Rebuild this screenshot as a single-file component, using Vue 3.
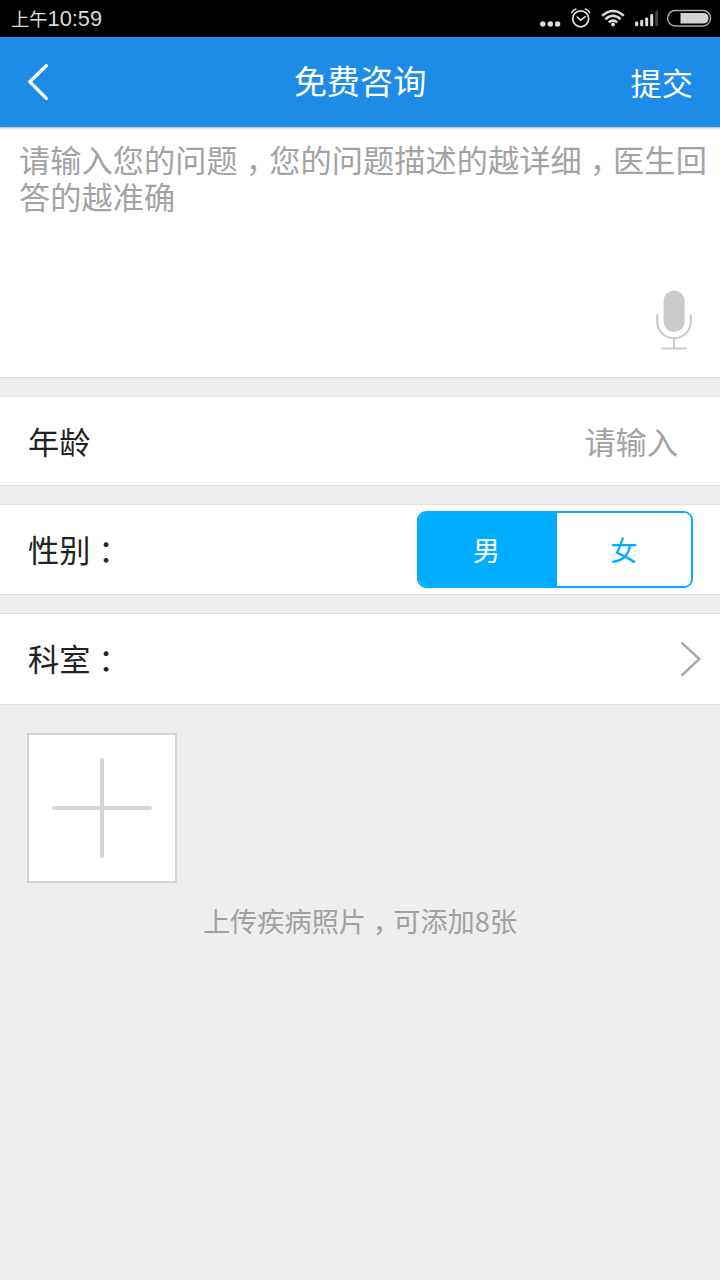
<script setup>
import { ref } from 'vue'

const gender = ref('male')
const question = ref('')
</script>

<template>
  <div class="screen">
    <div class="status">
      <div class="time"><span class="ampm">上午</span>10:59</div>
      <svg class="status-icons" width="190" height="37" viewBox="530 0 190 37" fill="none">
        <g fill="#dcdcdc">
          <circle cx="542.8" cy="24" r="2.7" />
          <circle cx="550.3" cy="24" r="2.7" />
          <circle cx="557.6" cy="24" r="2.7" />
        </g>
        <g stroke="#dcdcdc" stroke-linecap="round">
          <circle cx="580.7" cy="18.8" r="8" stroke-width="1.8" />
          <path d="M577.2 17l3.6 3.2 4.4-3.6" stroke-width="1.6" />
          <path d="M571.7 12.6q1.2-2.4 4.2-3.6M589.7 12.6q-1.2-2.4-4.2-3.6" stroke-width="1.6" />
        </g>
        <g stroke="#dcdcdc" stroke-width="2.5">
          <path d="M602.2 15.8q10.8-9.6 21.6 0" />
          <path d="M605.4 19.2q7.6-6.8 15.2 0" />
          <path d="M608.8 22.4q4.2-3.6 8.4 0" />
        </g>
        <circle cx="613" cy="24.5" r="1.9" fill="#dcdcdc" />
        <g fill="#dcdcdc">
          <rect x="635.2" y="21.6" width="3" height="4.6" rx="1" />
          <rect x="640.2" y="20" width="3" height="6.2" rx="1" />
          <rect x="645.2" y="17.4" width="3" height="8.8" rx="1" />
          <rect x="650.2" y="14" width="3" height="12.2" rx="1" />
          <rect x="655.2" y="10.4" width="2.8" height="15.8" rx="1" fill="#444" />
        </g>
        <rect x="667.6" y="10.6" width="43" height="15.4" rx="7.7" stroke="#a9a9a9" stroke-width="1.5" />
        <path d="M680.5 13h22.5q5.5 0 5.5 5.3t-5.5 5.3h-22.5z" fill="#d2d2d2" />
      </svg>
    </div>

    <header class="header">
      <svg class="back" width="24" height="40" viewBox="0 0 24 40">
        <path d="M20.3 3.7L3.7 19.7 20.3 36.3" fill="none" stroke="#fff" stroke-width="3.3" stroke-linecap="round" stroke-linejoin="round" />
      </svg>
      <h1>免费咨询</h1>
      <a class="submit">提交</a>
    </header>

    <section class="question">
      <p v-if="!question" class="placeholder">请输入您的问题<span class="comma">，</span>您的问题描述的越详细<span class="comma">，</span>医生回答的越准确</p>
      <svg class="mic" width="38" height="62" viewBox="0 0 38 62">
        <rect x="8.6" y="1.5" width="21" height="41.5" rx="10.5" fill="#cacaca" />
        <path d="M2.2 26v6.5a16.8 16.8 0 0 0 33.6 0v-6.5M19 49.5v9M7.5 59.5h23.5" fill="none" stroke="#cacaca" stroke-width="2.1" stroke-linecap="round" />
      </svg>
    </section>

    <section class="row age">
      <span>年龄</span>
      <span class="input">请输入</span>
    </section>

    <section class="row sex">
      <span>性别<span class="colon">：</span></span>
      <div class="toggle">
        <button :class="{ on: gender === 'male' }" @click="gender = 'male'">男</button>
        <button :class="{ on: gender === 'female' }" @click="gender = 'female'">女</button>
      </div>
    </section>

    <section class="row dept">
      <span>科室<span class="colon">：</span></span>
      <svg class="chevron" width="22" height="36" viewBox="0 0 22 36">
        <path d="M2.2 2.2L19.3 18 2.2 34" fill="none" stroke="#a9a9a9" stroke-width="2.4" stroke-linecap="round" />
      </svg>
    </section>

    <section class="upload">
      <div class="add">
        <svg width="102" height="102" viewBox="0 0 102 102">
          <path d="M51 3v96M3 51h96" stroke="#d5d5d5" stroke-width="4" stroke-linecap="round" />
        </svg>
      </div>
      <p class="hint">上传疾病照片<span class="comma">，</span>可添加8张</p>
    </section>
  </div>
</template>

<style>
body {
  background: #eee;
}
</style>

<style scoped>
.screen {
  width: 720px;
  height: 1280px;
  overflow: hidden;
  background: #eee;
  color: #222;
  font: 31.2px/37px "Noto Sans CJK SC", sans-serif;
}
h1, p {
  margin: 0;
  font-weight: 400;
}
svg {
  display: block;
  flex: none;
}
.status {
  display: flex;
  justify-content: space-between;
  height: 37px;
  background: #000;
}
.time {
  padding-left: 11px;
  color: #dcdcdc;
  font: 21.8px/37px "Liberation Sans", "Noto Sans CJK SC", sans-serif;
}
.ampm {
  font-size: 18.3px;
}
.header {
  display: grid;
  grid-template-columns: 1fr auto 1fr;
  align-items: center;
  height: 90px;
  padding: 0 27px 0 26px;
  background: #1d8ce6;
  color: #fff;
  box-shadow: 0 1px 2px rgba(80, 50, 20, 0.4);
  position: relative;
}
h1 {
  padding: 0 0 4px 1px;
  font-size: 33.2px;
  line-height: 40px;
}
.submit {
  justify-self: end;
  padding-bottom: 1px;
}
.question {
  box-sizing: border-box;
  display: flex;
  flex-direction: column;
  justify-content: space-between;
  height: 251px;
  padding: 13px 0 26px 19px;
  border-bottom: 1px solid #dedede;
  background: #fff;
}
.placeholder {
  color: #a3a3a3;
  width: 701px;
  letter-spacing: 0.08px;
}
.mic {
  align-self: flex-end;
  margin-right: 27px;
}
.comma {
  padding: 0 0.25em;
  font-feature-settings: "halt";
}
.colon {
  padding: 0 0.25em;
  font-feature-settings: "halt";
}
.row {
  box-sizing: border-box;
  display: flex;
  align-items: center;
  justify-content: space-between;
  height: 91px;
  margin-top: 18px;
  padding-left: 28px;
  border-top: 1px solid #dfdfdf;
  border-bottom: 1px solid #dfdfdf;
  background: #fff;
}
.row > span {
  padding-bottom: 2px;
}
.age {
  height: 90px;
}
.dept {
  height: 92px;
}
.dept > span {
  padding-bottom: 3px;
}
.row .input {
  color: #a3a3a3;
  padding-right: 42px;
}
.toggle {
  box-sizing: border-box;
  display: flex;
  width: 276px;
  height: 77px;
  margin-right: 27px;
  border: 2px solid #00adff;
  border-radius: 9px;
  overflow: hidden;
}
.toggle button {
  flex: 0 0 134px;
  padding: 0;
  border: 0;
  background: #fff;
  color: #00adff;
  font: 27.3px/73px "Noto Sans CJK SC", sans-serif;
}
.toggle button:first-child {
  box-sizing: border-box;
  flex-basis: 138px;
  padding-right: 3px;
}
.toggle .on {
  background: #00adff;
  color: #fff;
}
.chevron {
  margin-right: 18px;
}
.upload {
  padding: 28px 27px 0;
}
.add {
  box-sizing: border-box;
  display: grid;
  place-items: center;
  width: 150px;
  height: 150px;
  border: 2px solid #d4d4d4;
  background: #fff;
}
.hint {
  margin-top: 19px;
  color: #a0a0a0;
  text-align: center;
  font-size: 27.2px;
  line-height: 36px;
}
</style>
